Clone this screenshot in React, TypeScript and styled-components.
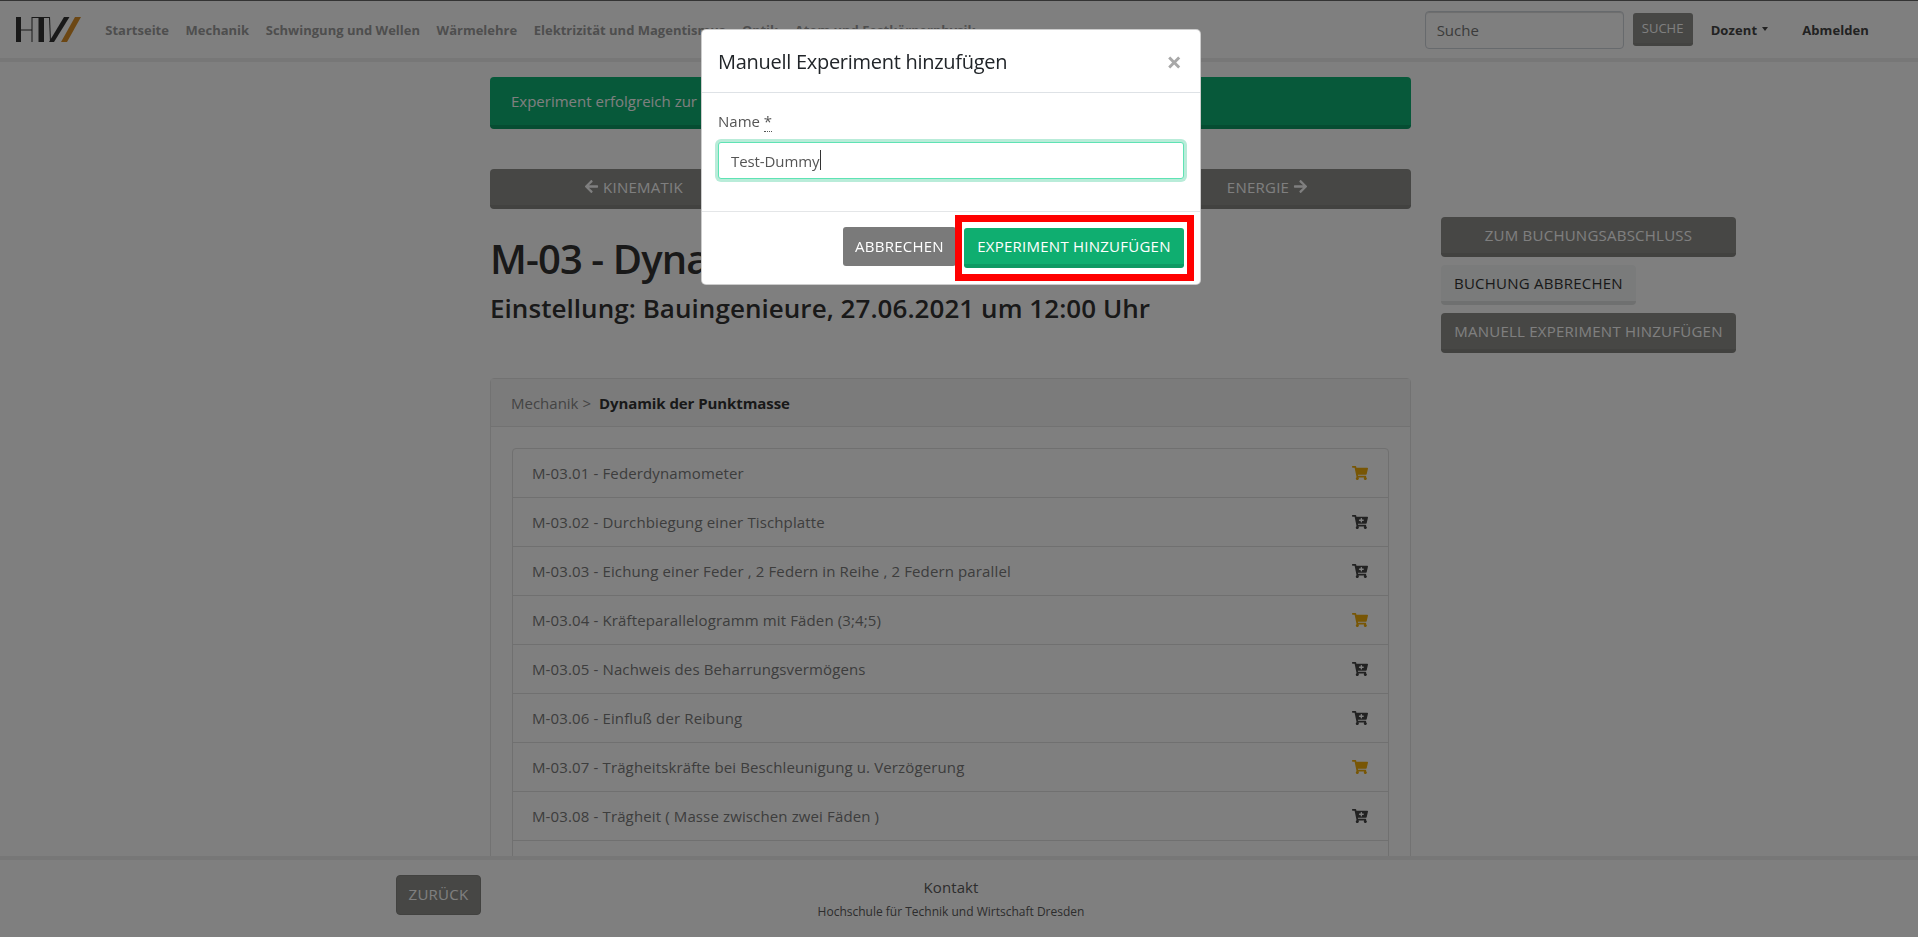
import styled, { createGlobalStyle } from "styled-components";
import { FaArrowLeft, FaArrowRight, FaCartPlus, FaShoppingCart } from "react-icons/fa";

const experiments = [
  { label: "M-03.01 - Federdynamometer", booked: true },
  { label: "M-03.02 - Durchbiegung einer Tischplatte", booked: false },
  { label: "M-03.03 - Eichung einer Feder , 2 Federn in Reihe , 2 Federn parallel", booked: false },
  { label: "M-03.04 - Kräfteparallelogramm mit Fäden (3;4;5)", booked: true },
  { label: "M-03.05 - Nachweis des Beharrungsvermögens", booked: false },
  { label: "M-03.06 - Einfluß der Reibung", booked: false },
  { label: "M-03.07 - Trägheitskräfte bei Beschleunigung u. Verzögerung", booked: true },
  { label: "M-03.08 - Trägheit ( Masse zwischen zwei Fäden )", booked: false },
  { label: "M-03.09", booked: false },
];

const navLinks = [
  "Startseite",
  "Mechanik",
  "Schwingung und Wellen",
  "Wärmelehre",
  "Elektrizität und Magentismus",
  "Optik",
  "Atom und Festkörperphysik",
];

function App() {
  return (
    <>
      <GlobalStyle />
      <StNavbar>
        <StLogo viewBox="0 0 65 25" aria-label="HTW">
          <rect x="0" y="0" width="5" height="25" fill="#333" />
          <rect x="5" y="12.5" width="11" height="1" fill="#333" />
          <rect x="15.5" y="0" width="1" height="25" fill="#333" />
          <rect x="16" y="0" width="17" height="1" fill="#333" />
          <rect x="22.5" y="0" width="5.5" height="25" fill="#333" />
          <path d="M33 0h1l1 25h-1z" fill="#333" />
          <path d="M48 0h5.5L38 25h-5z" fill="#333" />
          <path d="M59 0h6L51 25h-6z" fill="#d98f28" />
        </StLogo>
        <StNavList>
          {navLinks.map((link) => (
            <StNavLink key={link}>{link}</StNavLink>
          ))}
        </StNavList>
        <StSearchInput placeholder="Suche" />
        <StSearchBtn>Suche</StSearchBtn>
        <StUserMenu>Dozent<StCaret /></StUserMenu>
        <StLogout>Abmelden</StLogout>
      </StNavbar>

      <StMain>
        <StContent>
          <StAlert>Experiment erfolgreich zur Buchung hinzugefügt</StAlert>
          <StPager>
            <StButton><FaArrowLeft size={15} /> Kinematik</StButton>
            <span />
            <StButton><span>Energie</span> <FaArrowRight size={15} /></StButton>
          </StPager>
          <StTitle>M-03 - Dynamik der Punktmasse</StTitle>
          <StSubtitle>Einstellung: Bauingenieure, 27.06.2021 um 12:00 Uhr</StSubtitle>
          <StCard>
            <StCardHeader>Mechanik &gt; <b>Dynamik der Punktmasse</b></StCardHeader>
            <StCardBody>
              <StList>
                {experiments.map((item) => (
                  <StListItem key={item.label}>
                    {item.label}
                    {item.booked ? (
                      <StBookedIcon><FaShoppingCart size={16} /></StBookedIcon>
                    ) : (
                      <StAddIcon><FaCartPlus size={16} /></StAddIcon>
                    )}
                  </StListItem>
                ))}
              </StList>
            </StCardBody>
          </StCard>
        </StContent>
        <StSide>
          <StButton>Zum Buchungsabschluss</StButton>
          <StLightButton>Buchung abbrechen</StLightButton>
          <StButton>Manuell Experiment hinzufügen</StButton>
        </StSide>
      </StMain>

      <StFooter>
        <StBackBtn>Zurück</StBackBtn>
        <StFooterText>
          <StContact>Kontakt</StContact>
          <StSchool>Hochschule für Technik und Wirtschaft Dresden</StSchool>
        </StFooterText>
      </StFooter>

      <StBackdrop />
      <StModal>
        <StModalHeader>
          <StModalTitle>Manuell Experiment hinzufügen</StModalTitle>
          <StClose>×</StClose>
        </StModalHeader>
        <StModalBody>
          <StLabel>Name <abbr>*</abbr></StLabel>
          <StInputWrap>
            <StInput defaultValue="Test-Dummy" />
            <StTextCaret />
          </StInputWrap>
        </StModalBody>
        <StModalFooter>
          <StCancelBtn>Abbrechen</StCancelBtn>
          <StHighlight>
            <StPrimaryBtn>Experiment hinzufügen</StPrimaryBtn>
          </StHighlight>
        </StModalFooter>
      </StModal>
    </>
  );
}

export default App;

const GlobalStyle = createGlobalStyle`
  html, body {
    margin: 0;
    height: 100%;
    overflow: hidden;
    background: #fff;
  }
  body {
    font-family: "Open Sans", "Noto Sans", sans-serif;
    font-size: 15px;
    color: #7a7a7a;
  }
  * {
    box-sizing: border-box;
  }
`;

const StNavbar = styled.nav`
  height: 62px;
  display: flex;
  align-items: center;
  padding: 0 49px 0 16px;
  background: #fff;
  border-top: 1px solid #666;
  border-bottom: 4px solid #eee;
`;

const StLogo = styled.svg`
  width: 65px;
  height: 25px;
  margin-right: 16px;
  flex: none;
`;

const StNavList = styled.div`
  display: flex;
  flex: 1;
`;

const StNavLink = styled.a`
  padding: 0 8.3px;
  font-size: 13px;
  font-weight: 700;
  color: #9c9c9c;
  white-space: nowrap;
`;

const StSearchInput = styled.input`
  width: 199px;
  height: 38px;
  padding: 0 11px;
  font: 15px "Open Sans", sans-serif;
  background: #fff;
  border: 1px solid #ced4da;
  border-radius: 4px;
  box-shadow: inset 0 1px 1px rgba(0, 0, 0, 0.15);
  &::placeholder {
    color: #777;
  }
`;

const StSearchBtn = styled.button`
  width: 60px;
  height: 33px;
  margin-left: 9px;
  padding: 0;
  font: 13px "Open Sans", sans-serif;
  text-transform: uppercase;
  color: #fff;
  background: #8e8e8a;
  border: 0;
  border-bottom: 3px solid #868682;
  border-radius: 3px;
`;

const StUserMenu = styled.a`
  display: flex;
  align-items: center;
  margin-left: 18px;
  font-size: 13px;
  font-weight: 700;
  letter-spacing: 0.1px;
  color: #444;
`;

const StCaret = styled.i`
  margin-left: 5px;
  margin-top: -2px;
  border-top: 4px solid #444;
  border-left: 3.5px solid transparent;
  border-right: 3.5px solid transparent;
`;

const StLogout = styled.a`
  margin-left: 34px;
  font-size: 13px;
  font-weight: 700;
  letter-spacing: 0.1px;
  color: #444;
`;

const StMain = styled.main`
  display: grid;
  grid-template-columns: 921px 295px;
  column-gap: 30px;
  padding: 15px 0 0 490px;
`;

const StContent = styled.div`
  min-width: 0;
`;

const StAlert = styled.div`
  height: 52px;
  padding: 12px 21px 0;
  line-height: 24px;
  font-size: 15px;
  color: #fff;
  background: #0eb274;
  border-bottom: 4px solid #0c9a64;
  border-radius: 4px;
`;

const StButton = styled.button`
  display: flex;
  align-items: center;
  justify-content: center;
  gap: 4px;
  width: 100%;
  height: 40px;
  padding: 0 0 1px;
  font: 15px "Open Sans", sans-serif;
  letter-spacing: 0.24px;
  text-transform: uppercase;
  white-space: nowrap;
  color: #fff;
  background: #8e8e8a;
  border: 0;
  border-bottom: 4px solid #848480;
  border-radius: 4px;
`;

const StPager = styled.div`
  display: grid;
  grid-template-columns: repeat(3, 1fr);
  column-gap: 30px;
  margin-top: 40px;
`;

const StTitle = styled.h1`
  margin: 26px 0 0;
  font-size: 40px;
  line-height: 48px;
  font-weight: 600;
  letter-spacing: -0.9px;
  color: #333;
`;

const StSubtitle = styled.h3`
  margin: 9px 0 0;
  font-size: 26px;
  line-height: 32px;
  font-weight: 600;
  letter-spacing: 0.05px;
  color: #333;
`;

const StCard = styled.section`
  margin-top: 54px;
  background: #fff;
  border: 1px solid #e5e5e5;
  border-radius: 4px;
`;

const StCardHeader = styled.header`
  height: 48px;
  padding: 0 20px;
  display: flex;
  align-items: center;
  gap: 8px;
  color: #888;
  background: #f7f7f7;
  border-bottom: 1px solid #e5e5e5;
  b {
    letter-spacing: -0.08px;
    color: #333;
  }
`;

const StCardBody = styled.div`
  padding: 21px;
`;

const StList = styled.ul`
  margin: 0;
  padding: 0;
  list-style: none;
  border: 1px solid #e0e0e0;
  border-radius: 4px;
`;

const StListItem = styled.li`
  height: 49px;
  padding: 0 20px 0 19px;
  display: flex;
  align-items: center;
  justify-content: space-between;
  letter-spacing: 0.13px;
  border-bottom: 1px solid #e0e0e0;
  &:last-child {
    border-bottom: 0;
  }
`;

const StBookedIcon = styled.span`
  display: flex;
  color: #f0ad0a;
`;

const StAddIcon = styled.span`
  display: flex;
  color: #444;
`;

const StSide = styled.aside`
  display: flex;
  flex-direction: column;
  align-items: flex-start;
  gap: 8px;
  padding-top: 140px;
`;

const StLightButton = styled(StButton)`
  width: auto;
  padding: 0 13px 1px;
  color: #333;
  background: #f4f6f6;
  border-bottom-color: #dfe1e0;
`;

const StFooter = styled.footer`
  position: fixed;
  left: 0;
  right: 0;
  bottom: 0;
  height: 81px;
  display: flex;
  align-items: flex-start;
  padding: 15px 0 0 396px;
  background: #fff;
  border-top: 4px solid #eee;
`;

const StBackBtn = styled(StButton)`
  flex: none;
  width: 85px;
  padding: 0 0 3px;
  border: 1px solid #848480;
`;

const StFooterText = styled.div`
  width: 940px;
  text-align: center;
`;

const StContact = styled.div`
  line-height: 24px;
  letter-spacing: 0.1px;
  color: #5a5a5a;
`;

const StSchool = styled.div`
  margin-top: 1px;
  font-size: 12px;
  line-height: 24px;
  color: #5a5a5a;
`;

const StBackdrop = styled.div`
  position: fixed;
  inset: 0;
  background: rgba(0, 0, 0, 0.5);
`;

const StModal = styled.div`
  position: fixed;
  top: 29px;
  left: 701px;
  width: 500px;
  background: #fff;
  border: 1px solid rgba(0, 0, 0, 0.2);
  border-radius: 5px;
`;

const StModalHeader = styled.div`
  height: 63px;
  display: flex;
  align-items: center;
  justify-content: space-between;
  padding: 0 16px;
  border-bottom: 1px solid #dee2e6;
`;

const StModalTitle = styled.h5`
  margin: 0;
  font-size: 20px;
  font-weight: 500;
  letter-spacing: -0.28px;
  color: #212529;
`;

const StClose = styled.span`
  margin-right: 2px;
  font-size: 27px;
  font-weight: 700;
  line-height: 1;
  color: #a8a8a8;
`;

const StModalBody = styled.div`
  height: 118px;
  padding: 16px;
`;

const StLabel = styled.label`
  display: block;
  line-height: 24px;
  color: #555;
  abbr {
    border-bottom: 1px dotted #555;
  }
`;

const StInputWrap = styled.div`
  position: relative;
  margin-top: 9px;
`;

const StInput = styled.input`
  display: block;
  width: 466px;
  height: 37px;
  padding: 0 12px;
  font: 15px "Open Sans", sans-serif;
  letter-spacing: -0.1px;
  color: #555;
  background: #fff;
  border: 1px solid #5fe3b4;
  border-radius: 3px;
  outline: 0;
  box-shadow: 0 0 0 3px #b9ecd9;
`;

const StTextCaret = styled.i`
  position: absolute;
  top: 8px;
  left: 102px;
  width: 1px;
  height: 20px;
  background: #333;
`;

const StModalFooter = styled.div`
  display: flex;
  justify-content: flex-end;
  align-items: flex-start;
  gap: 8px;
  height: 73px;
  padding: 15px 16px 0;
  border-top: 1px solid #e4e6e8;
`;

const StCancelBtn = styled.button`
  width: 113px;
  height: 39px;
  padding: 0 0 2px;
  font: 15px "Open Sans", sans-serif;
  letter-spacing: 0.24px;
  text-transform: uppercase;
  color: #fff;
  background: #7a7a7a;
  border: 0;
  border-radius: 3px;
`;

const StHighlight = styled.div`
  position: relative;
  margin-top: 1px;
  &::after {
    content: "";
    position: absolute;
    inset: -13px -10px -13px -9px;
    border: 7px solid #f00;
  }
`;

const StPrimaryBtn = styled.button`
  display: block;
  width: 220px;
  height: 40px;
  padding: 0 0 1px;
  font: 15px "Open Sans", sans-serif;
  letter-spacing: 0.24px;
  text-transform: uppercase;
  color: #fff;
  background: #0fae70;
  border: 0;
  border-bottom: 4px solid #0d9a63;
  border-radius: 3px;
`;
